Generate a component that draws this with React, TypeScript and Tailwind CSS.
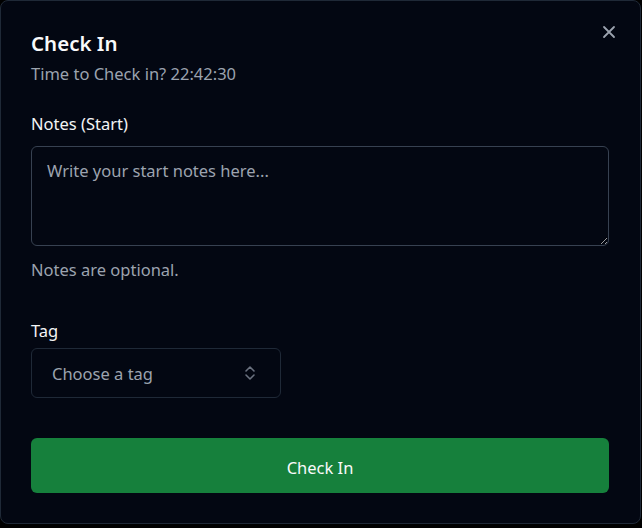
import React from "react";

export default function App() {
  return (
    <div className="w-[642px] h-[528px] bg-black" style={{ fontFamily: '"Noto Sans", sans-serif' }}>
      <div className="relative w-[641px] h-[524px] rounded-lg border border-[#1f2937] bg-[#030712] pl-[30px] pr-[31px] pt-[27px]">
        <button className="absolute right-[24px] top-[24px] text-[#9ca3af]">
          <svg width="14" height="14" viewBox="0 0 14 14" fill="none" stroke="currentColor" strokeWidth="1.8" strokeLinecap="round">
            <path d="M2 2 L12 12 M12 2 L2 12" />
          </svg>
        </button>
        <h2 className="text-[20.5px] font-semibold leading-[30px] text-[#f9fafb]">Check In</h2>
        <p className="mt-[4px] text-[16.5px] leading-[24px] text-[#9ca3af]">Time to Check in? 22:42:30</p>
        <label className="mt-[26px] block text-[16.5px] leading-[24px] text-[#f3f4f6]">Notes (Start)</label>
        <textarea
          className="mt-[10px] block h-[100px] w-full rounded-md border border-[#374151] bg-transparent px-[15px] pt-[12px] pb-[10px] text-[16.5px] leading-[24px] text-[#f3f4f6] placeholder:text-[#9ca3af] outline-none"
          placeholder="Write your start notes here..."
        />
        <p className="mt-[12px] text-[16.5px] leading-[24px] text-[#9ca3af]">Notes are optional.</p>
        <label className="mt-[37px] block text-[16.5px] leading-[24px] text-[#f3f4f6]">Tag</label>
        <div className="mt-[5px] flex h-[50px] w-[250px] items-center justify-between rounded-md border border-[#1f2937] pl-[20px] pr-[23px]">
          <span className="pt-[3px] text-[16.5px] text-[#9ca3af]">Choose a tag</span>
          <svg width="14" height="18" viewBox="0 0 14 18" fill="none" stroke="#6b7280" strokeWidth="1.6" strokeLinecap="round" strokeLinejoin="round">
            <path d="M3 7 L7 3 L11 7 M3 11 L7 15 L11 11" />
          </svg>
        </div>
        <button className="mt-[40px] flex h-[55px] w-full items-center justify-center rounded-md bg-[#16803c] pt-[5px] text-[16.5px] text-[#f9fafb]">
          Check In
        </button>
      </div>
    </div>
  );
}
